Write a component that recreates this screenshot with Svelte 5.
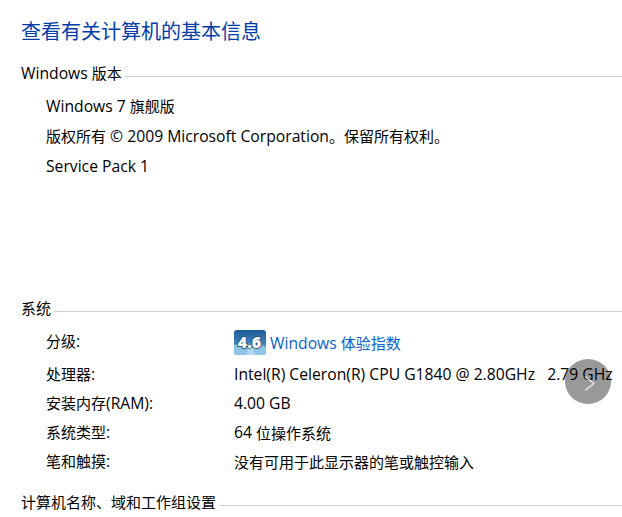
<script>
  const rows = [
    { label: '处理器:', value: 'Intel(R) Celeron(R) CPU G1840 @ 2.80GHz   2.79 GHz' },
    { label: '安装内存(RAM):', value: '4.00 GB' },
    { label: '系统类型:', value: '64 位操作系统' },
    { label: '笔和触摸:', value: '没有可用于此显示器的笔或触控输入' }
  ];
  const parts = (s) => s.match(/[\u3000-\u9fff]+|[^\u3000-\u9fff]+/g);
  const isCjk = (s) => /[\u3000-\u9fff]/.test(s);
</script>

{#snippet mixed(s)}{#each parts(s) as p}<span class={isCjk(p) ? 'cjk' : 'lat'}>{p}</span>{/each}{/snippet}

<main class="page">
  <h1>查看有关计算机的基本信息</h1>

  <section class="edition">
    <div class="head"><span>{@render mixed('Windows 版本')}</span><i></i></div>
    <div class="lines">
      <p>{@render mixed('Windows 7 旗舰版')}</p>
      <p>{@render mixed('版权所有 © 2009 Microsoft Corporation。保留所有权利。')}</p>
      <p>{@render mixed('Service Pack 1')}</p>
    </div>
  </section>

  <section class="system">
    <div class="head"><span>{@render mixed('系统')}</span><i></i></div>
    <div class="grid">
      <div class="row rating">
        <span class="label">{@render mixed('分级:')}</span>
        <span class="value">
          <svg class="badge" width="32" height="25" viewBox="0 0 32 25">
            <defs>
              <linearGradient id="g" x1="0" y1="0" x2="0" y2="1">
                <stop offset="0" stop-color="#1c5a96" />
                <stop offset="0.55" stop-color="#3f83bd" />
                <stop offset="1" stop-color="#a9d3ee" />
              </linearGradient>
            </defs>
            <rect width="32" height="25" rx="3" fill="url(#g)" />
            <path d="M0 15 Q14 11 32 17 L32 22 Q32 25 29 25 L3 25 Q0 25 0 22Z" fill="#8fc3e6" />
            <path d="M12 25 L16 15 L22 25Z" fill="#c8e4f5" opacity=".6" />
            <text x="15.5" y="18" text-anchor="middle" class="score">4.6</text>
          </svg>
          <span class="link">{@render mixed('Windows 体验指数')}</span>
        </span>
      </div>
      {#each rows as r}
        <div class="row">
          <span class="label">{@render mixed(r.label)}</span>
          <span class="value">{@render mixed(r.value)}</span>
        </div>
      {/each}
    </div>
  </section>

  <section class="computer">
    <div class="head"><span>{@render mixed('计算机名称、域和工作组设置')}</span><i></i></div>
  </section>

  <div class="next">
    <svg width="11" height="15" viewBox="0 0 11 15"><path d="M1 .5 L10 7.5 L1 14.5" fill="none" stroke="#eee" stroke-width="1.2" /></svg>
  </div>
</main>

<style>
  :global(body) {
    margin: 0;
    background: #fff;
  }
  .page {
    position: relative;
    width: 622px;
    height: 517px;
    overflow: hidden;
    padding: 19px 0 0 21px;
    box-sizing: border-box;
    font-family: "Open Sans", "Noto Sans CJK SC", sans-serif;
    color: #000;
  }
  .lat { font-size: 15.7px; }
  .cjk { font-size: 15px; font-family: "Noto Sans CJK SC", sans-serif; }
  h1 {
    margin: 0;
    font-size: 20px;
    line-height: 24px;
    font-weight: 400;
    color: #003da8;
    font-family: "Noto Sans CJK SC", sans-serif;
  }
  .head {
    display: flex;
    align-items: flex-start;
    height: 22px;
    line-height: 22px;
    gap: 3px;
    white-space: pre;
  }
  .head i {
    flex: 1;
    height: 1px;
    background: #cfcfcf;
    margin-top: 14px;
  }
  .edition { margin-top: 19px; }
  .lines {
    padding: 7px 0 0 25px;
  }
  .lines p {
    margin: 0;
    height: 30px;
    line-height: 30px;
    white-space: pre;
  }
  .system { margin-top: 116px; }
  .grid {
    padding: 9px 0 0 25px;
  }
  .row {
    display: grid;
    grid-template-columns: 188px 1fr;
    height: 29px;
    line-height: 29px;
    white-space: pre;
  }
  .rating { height: 31px; }
  .rating .label { line-height: 26px; }
  .value {
    display: flex;
    align-items: center;
    white-space: pre;
  }
  .rating .value { align-items: flex-start; padding-top: 2px; }
  .badge { margin: 0 4px 0 0; display: block; }
  .score {
    font-family: "Open Sans", sans-serif;
    font-weight: 800;
    font-size: 16px;
    fill: #fff;
    stroke: #2d4660;
    stroke-width: 1.6px;
    paint-order: stroke;
  }
  .link {
    color: #0a62cc;
    line-height: 25px;
  }
  .computer { margin-top: 16px; }
  .next {
    position: absolute;
    left: 565px;
    top: 359px;
    width: 46px;
    height: 45px;
    border-radius: 50%;
    background: rgba(0, 0, 0, 0.4);
    display: flex;
    align-items: center;
    justify-content: center;
  }
  .next svg { margin-top: 3px; margin-left: 2px; }
</style>
